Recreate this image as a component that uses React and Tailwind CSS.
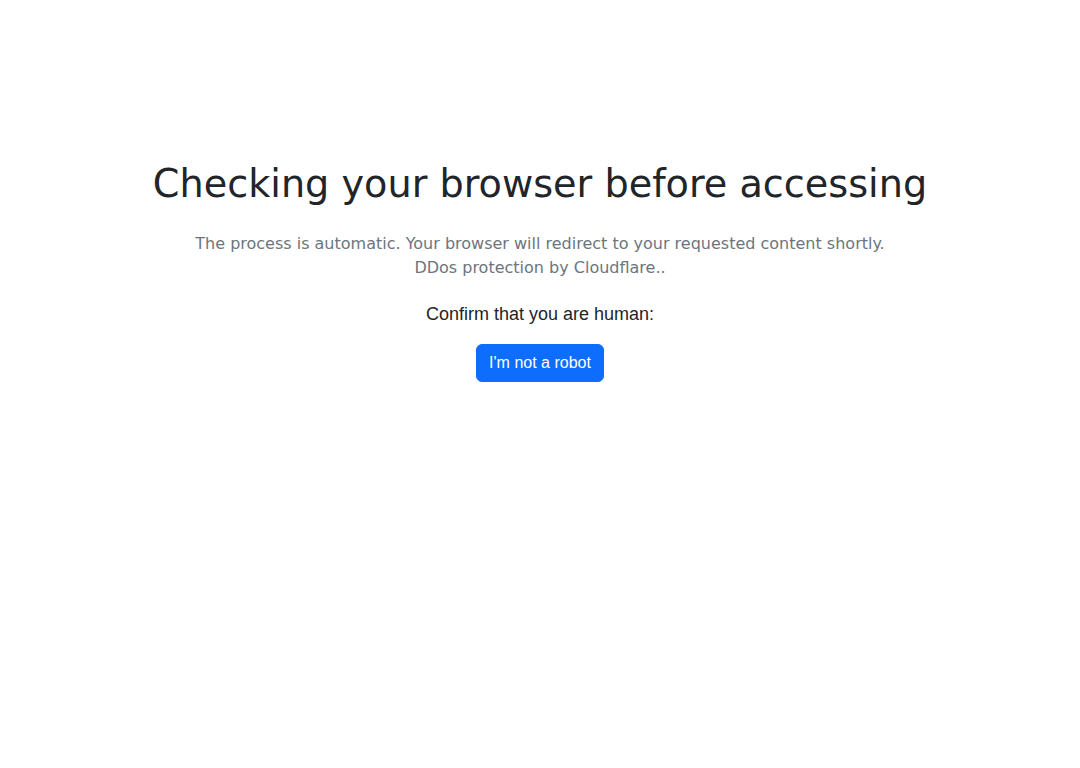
export default function App() {
  return (
    <div className="min-h-screen bg-white flex flex-col items-center pt-[161px] text-center">
      {/* Heading */}
      <h1 className="font-['DejaVu_Sans',sans-serif] text-[38.2px] leading-[46px] text-[#212529]">
        Checking your browser before accessing
      </h1>

      {/* Notice */}
      <p className="mt-[25px] font-['DejaVu_Sans',sans-serif] text-base leading-6 text-[#6c757d]">
        The process is automatic. Your browser will redirect to your requested content shortly.
        <br />
        DDos protection by Cloudflare..
      </p>

      {/* Captcha */}
      <p className="mt-[21px] font-['Liberation_Sans',Arial,sans-serif] text-[18px] leading-[27px] text-[#212529]">
        Confirm that you are human:
      </p>
      <button className="mt-[16px] font-['Liberation_Sans',Arial,sans-serif] text-base leading-6 text-white bg-[#0d6efd] border border-[#0d6efd] rounded-md px-3 py-1.5">
        I'm not a robot
      </button>
    </div>
  );
}
